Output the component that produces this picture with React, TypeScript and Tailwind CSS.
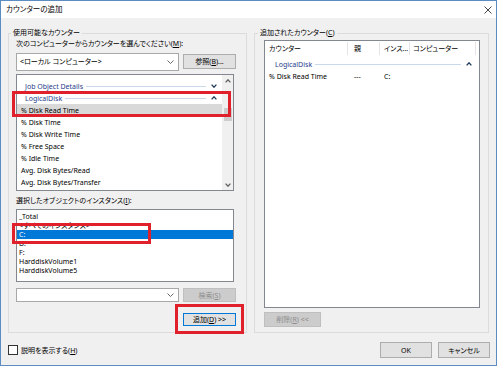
import React from "react";

const U = ({ c }: { c: string }) => <span className="underline underline-offset-[1px]">{c}</span>;

function ChevDown({ color = "#1e395b" }: { color?: string }) {
  return (
    <svg width="6" height="4" viewBox="0 0 6 4">
      <path d="M0.6 0.6 L3 3.2 L5.4 0.6" fill="none" stroke={color} strokeWidth="1.3" />
    </svg>
  );
}
function ChevUp({ color = "#1e395b" }: { color?: string }) {
  return (
    <svg width="6" height="4" viewBox="0 0 6 4">
      <path d="M0.6 3.4 L3 0.8 L5.4 3.4" fill="none" stroke={color} strokeWidth="1.3" />
    </svg>
  );
}
function ComboChev() {
  return (
    <svg width="7" height="4" viewBox="0 0 7 4">
      <path d="M0.5 0.5 L3.5 3.5 L6.5 0.5" fill="none" stroke="#6a6a6a" strokeWidth="1" />
    </svg>
  );
}

function GroupRow({ label, up, pl, pr }: { label: string; up?: boolean; pl: string; pr: string }) {
  return (
    <div className={`h-[12px] flex items-center ${pl} ${pr}`}>
      <span className="text-[#1e3b8a] whitespace-nowrap">{label}</span>
      <div className="flex-1 h-px bg-[#c9d8ea] ml-[3px] mr-[5px]" />
      {up ? <ChevUp /> : <ChevDown />}
    </div>
  );
}

function Item({ t, sel }: { t: string; sel?: boolean }) {
  return (
    <div className={`h-[12px] flex items-center pl-[4px] whitespace-nowrap ${sel ? "bg-[#d9d9d9]" : ""}`}>{t}</div>
  );
}

function Inst({ t, sel }: { t: string; sel?: boolean }) {
  return (
    <div className={`h-[9px] flex items-center pl-[2px] whitespace-nowrap ${sel ? "bg-[#0078d7] text-white" : ""}`}>{t}</div>
  );
}

export default function App() {
  return (
    <div className="relative w-[497px] h-[366px] border border-[#5b8cc2] bg-[#f0f0f0] flex flex-col text-[7px] text-black font-['Noto_Sans','Noto_Sans_CJK_JP',sans-serif] [font-feature-settings:'palt'] leading-none overflow-hidden">
      {/* title bar */}
      <div className="h-[17px] shrink-0 bg-white flex items-center justify-between pl-[5px] pr-[4px]">
        <span className="text-[7.5px]">カウンターの追加</span>
        <svg width="8" height="8" viewBox="0 0 8 8">
          <path d="M0.5 0.5 L7.5 7.5 M7.5 0.5 L0.5 7.5" stroke="#333" strokeWidth="0.9" />
        </svg>
      </div>

      {/* body */}
      <div className="flex flex-col px-[7px] pt-[10px]">
        <div className="flex gap-[7px]">
          {/* left group */}
          <fieldset className="w-[239px] h-[305px] border border-[#dcdcdc] p-0 m-0">
            <legend className="ml-[2px] px-[2px] leading-[10px]">使用可能なカウンター</legend>
            <div className="flex flex-col pl-[7px]">
              <div className="h-[11px] flex items-center whitespace-nowrap">
                次のコンピューターからカウンターを選んでください(<U c="M" />):
              </div>
              <div className="mt-[3px] h-[19px] flex items-center">
                <div className="w-[163px] h-[18px] bg-white border border-[#a8a8a8] flex items-center justify-between pl-[3px] pr-[4px]">
                  <span>&lt;ローカル コンピューター&gt;</span>
                  <ComboChev />
                </div>
                <div className="ml-[4px] w-[53px] h-[15px] bg-[#e1e1e1] border border-[#adadad] flex items-center justify-center">
                  参照(<U c="B" />)...
                </div>
              </div>
              {/* counter list */}
              <div className="mt-[3px] w-[218px] h-[117px] border border-[#828790] bg-white flex">
                <div className="flex-1 flex flex-col pt-[5px] overflow-hidden">
                  <GroupRow label="Job Object Details" pl="pl-[8px]" pr="pr-[5px]" />
                  <GroupRow label="LogicalDisk" up pl="pl-[8px]" pr="pr-[5px]" />
                  <Item t="% Disk Read Time" sel />
                  <Item t="% Disk Time" />
                  <Item t="% Disk Write Time" />
                  <Item t="% Free Space" />
                  <Item t="% Idle Time" />
                  <Item t="Avg. Disk Bytes/Read" />
                  <Item t="Avg. Disk Bytes/Transfer" />
                </div>
                <div className="w-[11px] bg-[#f0f0f0] flex flex-col items-center">
                  <div className="h-[11px] flex items-center justify-center">
                    <ChevUp color="#606060" />
                  </div>
                  <div className="flex-1 w-full flex flex-col items-center pt-[22px]">
                    <div className="w-[8px] h-[13px] bg-[#cdcdcd]" />
                  </div>
                  <div className="h-[11px] flex items-center justify-center">
                    <ChevDown color="#606060" />
                  </div>
                </div>
              </div>
              <div className="mt-[4px] h-[11px] flex items-center whitespace-nowrap">
                選択したオブジェクトのインスタンス(<U c="I" />):
              </div>
              {/* instance list */}
              <div className="mt-[3px] w-[218px] h-[73px] border border-[#828790] bg-white flex flex-col pt-[2px] overflow-hidden">
                <Inst t="_Total" />
                <Inst t="<すべてのインスタンス>" />
                <Inst t="C:" sel />
                <Inst t="D:" />
                <Inst t="F:" />
                <Inst t="HarddiskVolume1" />
                <Inst t="HarddiskVolume5" />
              </div>
              <div className="mt-[6px] h-[14px] flex items-center">
                <div className="w-[163px] h-[14px] bg-white border border-[#a8a8a8] flex items-center justify-end pr-[4px]">
                  <ComboChev />
                </div>
                <div className="ml-[4px] w-[53px] h-[14px] bg-[#cccccc] border border-[#bfbfbf] text-[#8c8c8c] flex items-center justify-center">
                  検索(<U c="S" />)
                </div>
              </div>
              <div className="mt-[11px] w-[220px] flex justify-end">
                <div className="w-[53px] h-[13px] bg-[#e1e1e1] border border-[#0078d7] flex items-center justify-center">
                  追加(<U c="D" />) &gt;&gt;
                </div>
              </div>
            </div>
          </fieldset>

          {/* right group */}
          <fieldset className="w-[235px] h-[305px] border border-[#dcdcdc] p-0 m-0">
            <legend className="ml-[3px] px-[2px] leading-[10px]">
              追加されたカウンター(<U c="C" />)
            </legend>
            <div className="flex flex-col pl-[9px]">
              <div className="mt-[2px] w-[216px] h-[268px] border border-[#828790] bg-white flex flex-col">
                <div className="h-[15px] flex items-stretch">
                  <div className="w-[83px] pl-[4px] flex items-center border-r border-[#e5e5e5] my-[1px]">カウンター</div>
                  <div className="w-[32px] pl-[6px] flex items-center border-r border-[#e5e5e5] my-[1px]">親</div>
                  <div className="w-[30px] pl-[4px] flex items-center border-r border-[#e5e5e5] my-[1px]">インス...</div>
                  <div className="w-[66px] pl-[3px] flex items-center border-r border-[#e5e5e5] my-[1px]">コンピューター</div>
                </div>
                <div className="mt-[2px]">
                  <GroupRow label="LogicalDisk" up pl="pl-[10px]" pr="pr-[7px]" />
                </div>
                <div className="h-[12px] flex items-center">
                  <div className="w-[83px] pl-[4px] whitespace-nowrap">% Disk Read Time</div>
                  <div className="w-[32px] pl-[6px]">---</div>
                  <div className="w-[30px] pl-[4px]">C:</div>
                </div>
              </div>
              <div className="mt-[4px] w-[57px] h-[15px] bg-[#cccccc] border border-[#bfbfbf] text-[#8c8c8c] flex items-center justify-center">
                削除(<U c="R" />) &lt;&lt;
              </div>
            </div>
          </fieldset>
        </div>

        {/* bottom row */}
        <div className="mt-[9px] h-[16px] flex items-center justify-between mr-[-1px]">
          <div className="flex items-center">
            <div className="w-[10px] h-[10px] bg-white border border-[#333]" />
            <span className="ml-[3px]">説明を表示する(<U c="H" />)</span>
          </div>
          <div className="flex gap-[6px]">
            <div className="w-[52px] h-[16px] bg-[#e1e1e1] border border-[#adadad] flex items-center justify-center">OK</div>
            <div className="w-[52px] h-[16px] bg-[#e1e1e1] border border-[#adadad] flex items-center justify-center">キャンセル</div>
          </div>
        </div>
      </div>

      {/* red annotation boxes */}
      <div className="absolute left-[11px] top-[90px] w-[219px] h-[26px] border-[3px] border-[#e0202a]" />
      <div className="absolute left-[11px] top-[222px] w-[139px] h-[21px] border-[3px] border-[#e0202a]" />
      <div className="absolute left-[174px] top-[303px] w-[69px] h-[30px] border-[3px] border-[#e0202a]" />
    </div>
  );
}
